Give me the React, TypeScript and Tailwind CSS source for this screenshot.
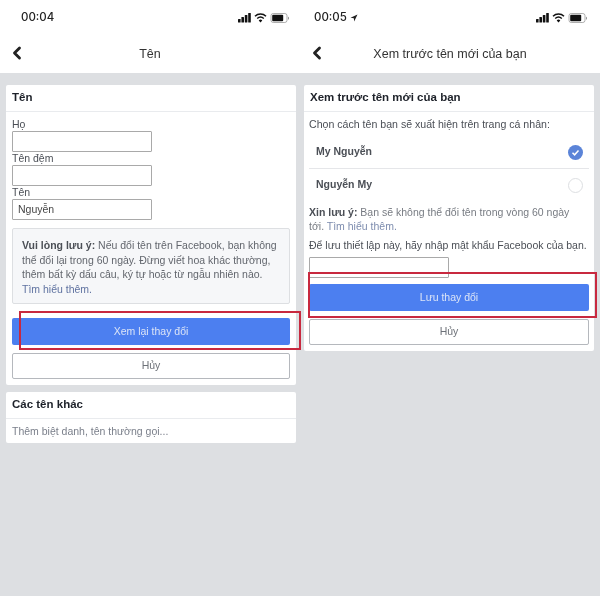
import { ChevronLeft } from "lucide-react";

function StatusIcons() {
  return (
    <svg width="52" height="12" viewBox="0 0 52 12" className="block">
      <rect x="0" y="7" width="2.6" height="3.4" rx="0.5" fill="#111" />
      <rect x="3.4" y="5" width="2.6" height="5.4" rx="0.5" fill="#111" />
      <rect x="6.8" y="3" width="2.6" height="7.4" rx="0.5" fill="#111" />
      <rect x="10.2" y="1" width="2.6" height="9.4" rx="0.5" fill="#111" />
      <path d="M17 4.2a8 8 0 0 1 11 0" fill="none" stroke="#111" strokeWidth="1.5" />
      <path d="M19.2 6.5a5 5 0 0 1 6.6 0" fill="none" stroke="#111" strokeWidth="1.5" />
      <path d="M20.7 8.4l1.8 2 1.8-2a2.6 2.6 0 0 0-3.6 0z" fill="#111" />
      <rect x="33" y="1.5" width="16" height="9" rx="2.2" fill="none" stroke="#999" strokeWidth="0.8" />
      <rect x="34.2" y="2.7" width="11" height="6.6" rx="1" fill="#111" />
      <rect x="50" y="4.7" width="1" height="2.8" rx="0.5" fill="#999" />
    </svg>
  );
}

function Header({ time, title, arrow, left }: { time: string; title: string; arrow?: boolean; left: string }) {
  return (
    <div className="bg-white h-[73px] shrink-0 flex flex-col">
      <div className={`h-[36px] flex items-center justify-between ${left}`}>
        <div className="flex items-center gap-[3px] text-[11.5px] font-medium text-[#222] leading-none font-['Inter',sans-serif]">
          {time}
          {arrow && (
            <svg width="8" height="8" viewBox="0 0 8 8">
              <path d="M7.5 0.5L0.5 3.8 3.8 4.2 4.2 7.5z" fill="#222" />
            </svg>
          )}
        </div>
        <StatusIcons />
      </div>
      <div className="relative h-[36px] flex items-center justify-center text-[12.5px] text-[#333]">
        <ChevronLeft size={20} strokeWidth={3.4} className="absolute left-[7px] top-[7px] text-[#222]" />
        {title}
      </div>
    </div>
  );
}

function CardTitle({ children }: { children: string }) {
  return (
    <div className="h-[26px] px-[6px] flex items-center text-[11.5px] font-bold text-[#1d2129] border-b border-[#e9ebee] box-content">
      {children}
    </div>
  );
}

function NameField({ label, value }: { label: string; value?: string }) {
  return (
    <div className="h-[34px] flex flex-col">
      <div className="text-[10.5px] leading-[12px] h-[13px] text-[#4b4f56]">{label}</div>
      <div className="w-[140px] h-[21px] border border-[#a9a9a9] bg-white px-[5px] flex items-center text-[10.5px] text-[#444] rounded-[1px]">
        {value}
      </div>
    </div>
  );
}

function Buttons({ label }: { label: string }) {
  return (
    <div className="flex flex-col gap-[8px]">
      <div className="h-[27px] rounded-[2px] bg-[#4c7ff0] flex items-center justify-center text-[10.5px] text-[#dbe4f7]">{label}</div>
      <div className="h-[26px] rounded-[2px] bg-white border border-[#b5b8bd] flex items-center justify-center text-[10.5px] text-[#6d7178]">Hủy</div>
    </div>
  );
}

export default function App() {
  return (
    <div className="relative w-[600px] h-[596px] overflow-hidden bg-[#dddfe2] flex font-['Liberation_Sans',Arial,sans-serif] blur-[0.4px]">
      {/* Left phone */}
      <div className="w-[300px] flex flex-col">
        <Header time="00:04" title="Tên" left="pl-[21px] pr-[10px]" />
        <div className="pl-[6px] pr-[4px] pt-[12px] flex flex-col gap-[7px]">
          <div className="bg-white rounded-[2px] h-[300px]">
            <CardTitle>Tên</CardTitle>
            <div className="px-[6px] pt-[6px]">
              <div className="flex flex-col">
                <NameField label="Họ" />
                <NameField label="Tên đệm" />
                <NameField label="Tên" value="Nguyễn" />
              </div>
              <div className="mt-[8px] h-[76px] bg-[#f6f7f9] border border-[#dddfe2] rounded-[2px] pl-[9px] pr-[6px] pt-[9px] text-[10.5px] leading-[14.5px] text-[#62666d]">
                <b className="text-[#4b4f56]">Vui lòng lưu ý:</b> Nếu đổi tên trên Facebook, bạn không thể đổi lại trong 60 ngày. Đừng viết hoa khác thường, thêm bất kỳ dấu câu, ký tự hoặc từ ngẫu nhiên nào. <span className="text-[#5f72a0]">Tìm hiểu thêm.</span>
              </div>
              <div className="mt-[14px]">
                <Buttons label="Xem lại thay đổi" />
              </div>
            </div>
          </div>
          <div className="bg-white rounded-[2px] h-[51px]">
            <CardTitle>Các tên khác</CardTitle>
            <div className="px-[6px] pt-[5px] text-[10.5px] text-[#7a7f8a]">Thêm biệt danh, tên thường gọi...</div>
          </div>
        </div>
      </div>

      {/* Right phone */}
      <div className="w-[300px] flex flex-col">
        <Header time="00:05" title="Xem trước tên mới của bạn" arrow left="pl-[14px] pr-[12px]" />
        <div className="pl-[4px] pr-[6px] pt-[12px]">
          <div className="bg-white rounded-[2px] h-[266px]">
            <CardTitle>Xem trước tên mới của bạn</CardTitle>
            <div className="px-[5px] pt-[5px]">
              <div className="text-[10.6px] leading-[14px] text-[#4b4f56]">Chọn cách tên bạn sẽ xuất hiện trên trang cá nhân:</div>
              <div className="mt-[5px] h-[33px] pl-[7px] pr-[6px] flex items-center justify-between border-b border-[#e5e6e9] text-[10.5px] font-bold text-[#4b4f56]">
                My Nguyễn
                <span className="w-[15px] h-[15px] rounded-full bg-[#5b84d8] flex items-center justify-center">
                  <svg width="9" height="9" viewBox="0 0 9 9">
                    <path d="M1.5 4.8L3.6 6.8 7.5 2.4" fill="none" stroke="#fff" strokeWidth="1.5" />
                  </svg>
                </span>
              </div>
              <div className="h-[32px] pl-[7px] pr-[6px] flex items-center justify-between text-[10.5px] font-bold text-[#4b4f56]">
                Nguyễn My
                <span className="w-[15px] h-[15px] rounded-full bg-white border border-[#dddfe2]" />
              </div>
              <div className="mt-[4px] pr-[12px] text-[10.5px] leading-[14px] text-[#777b82]">
                <b className="text-[#4b4f56]">Xin lưu ý:</b> Bạn sẽ không thể đổi tên trong vòng 60 ngày tới. <span className="text-[#7d8cae]">Tìm hiểu thêm.</span>
              </div>
              <div className="mt-[5px] text-[10.5px] leading-[14px] text-[#4b4f56] whitespace-nowrap">Để lưu thiết lập này, hãy nhập mật khẩu Facebook của bạn.</div>
              <div className="mt-[5px] w-[140px] h-[21px] border border-[#a9a9a9] bg-white rounded-[1px]" />
              <div className="mt-[6px]">
                <Buttons label="Lưu thay đổi" />
              </div>
            </div>
          </div>
        </div>
      </div>

      {/* Red annotation boxes */}
      <div className="absolute left-[19px] top-[311px] w-[282px] h-[39px] border-2 border-[#c8293f]" />
      <div className="absolute left-[308px] top-[272px] w-[289px] h-[46px] border-2 border-[#c8293f]" />
    </div>
  );
}
